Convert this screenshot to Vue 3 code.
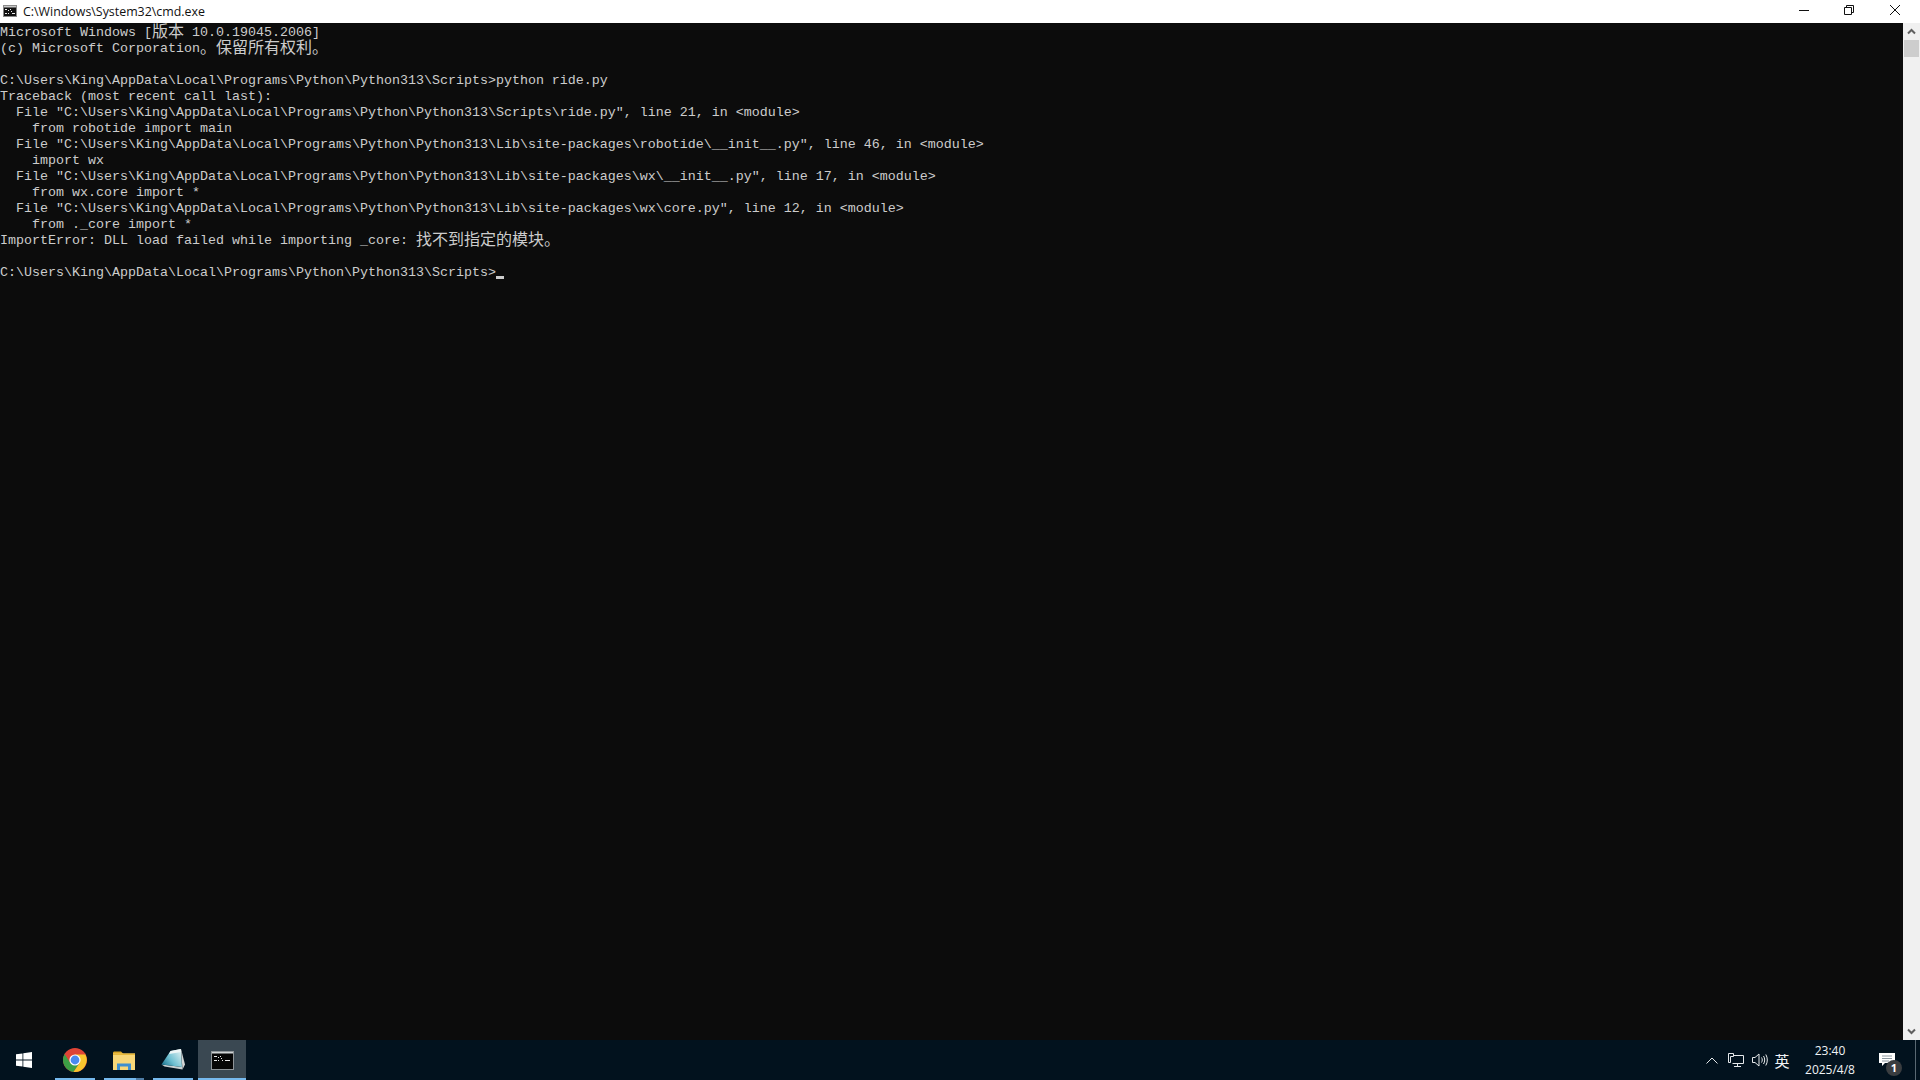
<script setup>
const lines = [
  [['Microsoft Windows ['], ['版本', 1], [' 10.0.19045.2006]']],
  [['(c) Microsoft Corporation'], ['。保留所有权利。', 1]],
  [],
  [['C:\\Users\\King\\AppData\\Local\\Programs\\Python\\Python313\\Scripts>python ride.py']],
  [['Traceback (most recent call last):']],
  [['  File "C:\\Users\\King\\AppData\\Local\\Programs\\Python\\Python313\\Scripts\\ride.py", line 21, in <module>']],
  [['    from robotide import main']],
  [['  File "C:\\Users\\King\\AppData\\Local\\Programs\\Python\\Python313\\Lib\\site-packages\\robotide\\__init__.py", line 46, in <module>']],
  [['    import wx']],
  [['  File "C:\\Users\\King\\AppData\\Local\\Programs\\Python\\Python313\\Lib\\site-packages\\wx\\__init__.py", line 17, in <module>']],
  [['    from wx.core import *']],
  [['  File "C:\\Users\\King\\AppData\\Local\\Programs\\Python\\Python313\\Lib\\site-packages\\wx\\core.py", line 12, in <module>']],
  [['    from ._core import *']],
  [['ImportError: DLL load failed while importing _core: '], ['找不到指定的模块。', 1]],
  [],
]
const prompt = 'C:\\Users\\King\\AppData\\Local\\Programs\\Python\\Python313\\Scripts>'
</script>

<template>
  <div class="screen">
    <header class="titlebar">
      <svg class="app-icon" width="14" height="12" viewBox="0 0 14 12">
        <rect x="0.5" y="0.500" width="13" height="11" fill="#111" stroke="#8a8a8a" />
        <rect x="1" y="1" width="12" height="1.500" fill="#c8c8c8" />
        <path d="M2 4h2v1H2zM2 8h2v1H2zM5 5h1v1H5zM5 8h1v1H5zM7 4h1v1H7zM8 6h1v1H8zM9 8h3v1H9z" fill="#eee" />
      </svg>
      <span class="title">C:\Windows\System32\cmd.exe</span>
      <div class="controls">
        <button class="ctl min">
          <svg width="10" height="10" viewBox="0 0 10 10"><path d="M0 5.500h10" stroke="#111" /></svg>
        </button>
        <button class="ctl">
          <svg width="10" height="10" viewBox="0 0 10 10" fill="none" stroke="#111"><path d="M.5 2.500h7v7h-7zM2.500 2.500v-2h7v7h-2" /></svg>
        </button>
        <button class="ctl">
          <svg width="10" height="10" viewBox="0 0 10 10"><path d="M0 0l10 10M10 0L0 10" stroke="#111" /></svg>
        </button>
      </div>
    </header>

    <main class="body">
      <section class="console">
        <div v-for="(line, i) in lines" :key="i" class="line"><span
          v-for="(part, j) in line" :key="j" :class="{ cjk: part[1] }">{{ part[0] }}</span></div>
        <div class="line">{{ prompt }}<span class="cursor"></span></div>
      </section>
      <aside class="scrollbar">
        <svg class="arrow" width="17" height="17" viewBox="0 0 17 17"><path d="M5 10.500l3.500-3.500 3.500 3.500" fill="none" stroke="#606060" stroke-width="2" /></svg>
        <div class="thumb"></div>
        <div class="track"></div>
        <svg class="arrow" width="17" height="17" viewBox="0 0 17 17"><path d="M5 6.500l3.500 3.500 3.500-3.500" fill="none" stroke="#606060" stroke-width="2" /></svg>
      </aside>
    </main>

    <footer class="taskbar">
      <div class="start">
        <svg width="16" height="16" viewBox="0 0 16 16" fill="#fff"><path d="M0 2.300l6.500-.9v6.200H0zM7.300 1.300L16 0v7.600H7.300zM0 8.400h6.500v6.200L0 13.700zM7.300 8.400H16V16l-8.700-1.200z" /></svg>
      </div>
      <div class="task open">
        <svg width="24" height="24" viewBox="0 0 24 24">
          <circle cx="12" cy="12" r="12" fill="#dd4436" />
          <path d="M7.200 14.700L1.600 6A12 12 0 0 0 10.500 23.900L16.800 14.700z" fill="#3c9f45" />
          <path d="M12 6.500H22.400A12 12 0 0 1 10.500 23.900L16.800 14.700z" fill="#f9c52e" />
          <circle cx="12" cy="12" r="5.600" fill="#fff" />
          <circle cx="12" cy="12" r="4.400" fill="#4a8af0" />
        </svg>
      </div>
      <div class="task open split">
        <svg width="22" height="19" viewBox="0 0 22 19">
          <path d="M0 2C0 1 .6.500 1.500.500H8l2.500 2.500H0z" fill="#dca726" />
          <rect x="0" y="2.500" width="22" height="16.500" fill="#f8d778" />
          <rect x="0" y="2.500" width="22" height="1.500" fill="#e7b83a" />
          <path d="M4 19v-6.500h14V19h-3v-3.500H7V19z" fill="#3f8fcf" />
        </svg>
      </div>
      <div class="task open">
        <svg width="24" height="24" viewBox="0 0 24 24">
          <defs>
            <linearGradient id="notes-page" x1="0" y1="0.900" x2="1" y2="0.200">
              <stop offset="0" stop-color="#17708c" />
              <stop offset="0.450" stop-color="#6fc0d2" />
              <stop offset="1" stop-color="#dceff1" />
            </linearGradient>
          </defs>
          <path d="M20 1L24 16.500 21.500 21.500z" fill="#d4d6d6" />
          <path d="M.5 16.500L21 19l.5 2.500L3.500 18.500z" fill="#c9d0d2" />
          <path d="M9.500 3L20 1 21 19 .5 16.500z" fill="url(#notes-page)" />
          <path d="M9.500 3L20 1l.2 3L8 6z" fill="#eef5f6" />
        </svg>
      </div>
      <div class="task active">
        <svg width="23" height="19" viewBox="0 0 23 19">
          <rect x=".5" y=".5" width="22" height="18" fill="#060606" stroke="#8e9498" />
          <rect x="1" y="1" width="21" height="1.500" fill="#cfd3d5" />
          <path d="M3 5h3v1H3zM3 9h3v1H3zM7 6h1v1H7zM7 9h1v1H7zM9 5h1v1H9zM10 7h1v1h-1zM11 9h1v1h-1zM14 9h5v1h-5z" fill="#e8e8e8" />
        </svg>
      </div>

      <div class="tray">
        <svg class="tray-icon chevron" width="12" height="7" viewBox="0 0 12 7"><path d="M.5 6.500L6 1l5.500 5.500" fill="none" stroke="#e6e9eb" /></svg>
        <svg class="tray-icon net" width="16" height="14" viewBox="0 0 16 14" fill="none" stroke="#e6e9eb"><path d="M.5 .5h5v3h-3v6H.5zM5.500 2.500h10v8h-11M9.500 10.500v3M6 13.500h7" /></svg>
        <svg class="tray-icon vol" width="16" height="14" viewBox="0 0 16 14" fill="none" stroke="#e6e9eb"><path d="M.5 4.500h2.500L7 1v12L3 9.500H.5zM9.500 4.500c1 1.500 1 3.500 0 5M11.500 3c1.600 2.500 1.600 5.500 0 8M13.800 1.500c2 3.500 2 7.500 0 11" /></svg>
        <span class="ime">英</span>
        <div class="clock"><span>23:40</span><span>2025/4/8</span></div>
        <div class="notify">
          <svg width="16" height="13" viewBox="0 0 16 13"><path d="M0 0h16v10H6l-3 3v-3H0z" fill="#fff" /><path d="M3 3h10M3 5.500h10M3 8h7" stroke="#8c98a0" /></svg>
          <span class="badge">1</span>
        </div>
        <div class="desktop"></div>
      </div>
    </footer>
  </div>
</template>

<style>
html, body { margin: 0; background: #0c0c0c; overflow: hidden; }
</style>

<style scoped>
.screen {
  width: 1920px;
  height: 1080px;
  display: flex;
  flex-direction: column;
  overflow: hidden;
}
.titlebar {
  height: 23px;
  flex: none;
  display: flex;
  align-items: center;
  background: #fff;
  padding: 0 2px;
}
.app-icon { flex: none; margin-left: 1px; margin-bottom: 1px; }
.title {
  margin-left: 6px;
  font: 12.4px/23px "Open Sans", "Noto Sans", sans-serif;
  color: #111;
}
.controls { margin-left: auto; display: flex; align-self: flex-start; }
.ctl {
  width: 46px;
  height: 20px;
  padding: 0;
  border: 0;
  background: transparent;
  display: flex;
  align-items: center;
  justify-content: center;
}
.ctl.min { width: 44px; }
.body { flex: 1; display: flex; min-height: 0; }
.console {
  flex: 1;
  background: #0c0c0c;
  color: #cccccc;
  padding-top: 2px;
  font-family: "Liberation Mono", "Noto Sans CJK SC", monospace;
  font-size: 13.33px;
  line-height: 16px;
}
.line { height: 16px; white-space: pre; }
.cjk {
  font-family: "Noto Sans CJK SC", sans-serif;
  font-size: 16px;
  line-height: 0;
  vertical-align: -1px;
}
.cursor {
  display: inline-block;
  width: 8px;
  height: 3px;
  background: #ccc;
  vertical-align: -3px;
}
.scrollbar {
  width: 17px;
  flex: none;
  background: #f0f0f0;
  display: flex;
  flex-direction: column;
  align-items: center;
}
.arrow { flex: none; }
.thumb { width: 15px; height: 17px; background: #cdcdcd; flex: none; }
.track { flex: 1; }
.taskbar {
  height: 40px;
  flex: none;
  background: #02121e;
  display: flex;
  align-items: stretch;
  color: #f0f3f5;
}
.start {
  width: 50px;
  box-sizing: border-box;
  padding-right: 2px;
  display: flex;
  align-items: center;
  justify-content: center;
}
.task {
  width: 49px;
  display: flex;
  align-items: center;
  justify-content: center;
  position: relative;
}
.task.open::after,
.task.active::after {
  content: "";
  position: absolute;
  left: 5px;
  right: 4px;
  bottom: 0;
  height: 2px;
  background: #76b9ed;
}
.task.split::before {
  content: "";
  position: absolute;
  right: 4px;
  bottom: 0;
  width: 8px;
  height: 2px;
  background: #4f7da6;
  z-index: 1;
}
.task.active { background: #3a4852; width: 48px; margin-left: 1px; }
.task.active::after { left: 0; right: 0; }
.tray {
  margin-left: auto;
  display: flex;
  align-items: center;
}
.tray-icon { flex: none; }
.chevron { margin-right: 10px; }
.net { margin-right: 8px; }
.vol { margin-right: 6px; }
.ime {
  font: 15px/1 "Noto Sans CJK SC", sans-serif;
  width: 16px;
  text-align: center;
}
.clock {
  width: 72px;
  margin-left: 4px;
  display: flex;
  flex-direction: column;
  align-items: center;
  gap: 3px;
  font: 12px/16px "Open Sans", "Noto Sans", sans-serif;
}
.notify {
  width: 36px;
  box-sizing: border-box;
  margin-left: 4px;
  padding: 0 2px 2px 0;
  height: 40px;
  position: relative;
  display: flex;
  align-items: center;
  justify-content: center;
}
.badge {
  position: absolute;
  left: 16px;
  top: 20px;
  width: 16px;
  height: 16px;
  border-radius: 50%;
  background: #3a3d40;
  color: #fff;
  font: 700 11px/16px "Open Sans", sans-serif;
  text-align: center;
}
.desktop {
  width: 1px;
  height: 40px;
  margin-left: 9px;
  margin-right: 4px;
  background: #5a6872;
}
</style>
